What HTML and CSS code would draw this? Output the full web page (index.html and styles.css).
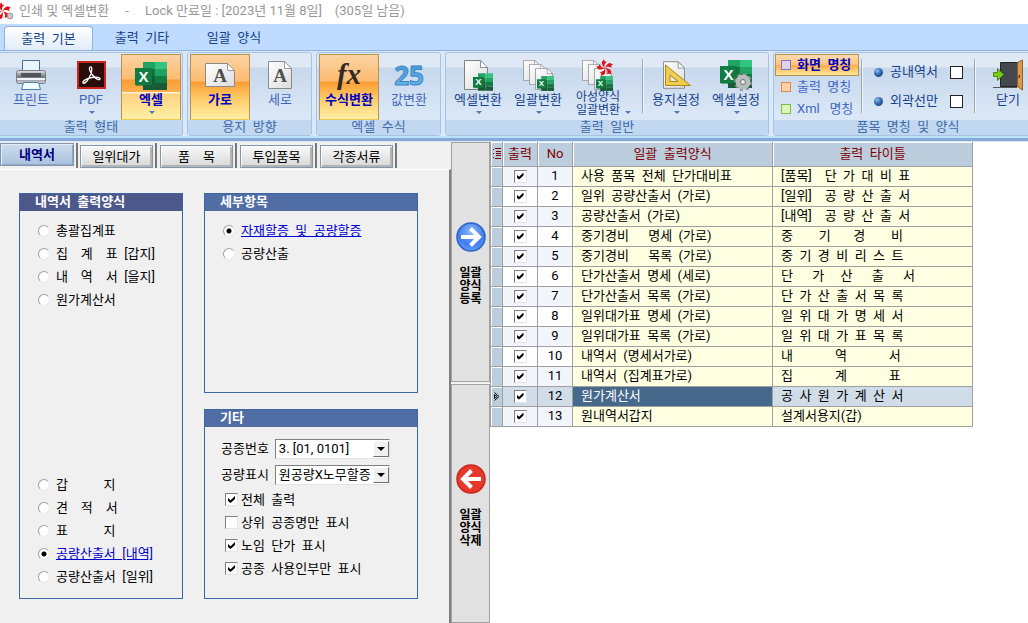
FILE: index.html
```html
<!DOCTYPE html>
<html lang="ko">
<head>
<meta charset="utf-8">
<title>인쇄 및 엑셀변환</title>
<link rel="stylesheet" href="styles.css">
</head>
<body>
<svg class="defs" aria-hidden="true">
  <defs>
    <linearGradient id="gPaper" x1="0" y1="0" x2="1" y2="1"><stop offset="0" stop-color="#fff"/><stop offset="1" stop-color="#dcdcdc"/></linearGradient>
    <linearGradient id="gBlue" x1="0" y1="0" x2="0" y2="1"><stop offset="0" stop-color="#3f8fd0"/><stop offset="1" stop-color="#6ec0f0"/></linearGradient>
    <linearGradient id="gGrey" x1="0" y1="0" x2="0" y2="1"><stop offset="0" stop-color="#e8e8e8"/><stop offset=".5" stop-color="#6f747a"/><stop offset="1" stop-color="#d5d8dc"/></linearGradient>
    <radialGradient id="gGo" cx=".5" cy=".3" r=".8"><stop offset="0" stop-color="#8db6fb"/><stop offset=".6" stop-color="#3f7cf0"/><stop offset="1" stop-color="#79b4ff"/></radialGradient>
    <symbol id="excel" viewBox="0 0 32 28">
      <path fill="#21a366" d="M8 0h12v7H8z"/><path fill="#33c481" d="M20 0h12v7H20z"/>
      <path fill="#107c41" d="M8 7h12v7H8z"/><path fill="#21a366" d="M20 7h12v7H20z"/>
      <path fill="#185c37" d="M8 14h12v14H8z"/><path fill="#107c41" d="M20 14h12v7H20z"/><path fill="#185c37" d="M20 21h12v7H20z"/>
      <path fill="#0b5a30" d="M1 7h17v17H1z" opacity=".5"/><path fill="#107c41" d="M0 6h17v17H0z"/>
      <text x="8.500" y="19.500" text-anchor="middle" class="svg-x">X</text>
    </symbol>
    <symbol id="page" viewBox="0 0 24 30">
      <path fill="url(#gPaper)" stroke="#7d8186" d="M.5.5h16l7 7v22H.5z"/><path fill="#fff" stroke="#8d9196" d="M16.500.5v7h7z"/>
    </symbol>
    <symbol id="flower" viewBox="-10 -10 20 20">
      <g fill="#e01418">
        <path id="petal" d="M0 0C-2-2-4-4-3.500-7L-1-9.800L-.5-7.500L2-7C0-5-1.500-3 0 0Z"/>
        <use href="#petal" transform="rotate(72)"/><use href="#petal" transform="rotate(144)"/>
        <use href="#petal" transform="rotate(216)"/><use href="#petal" transform="rotate(288)"/>
      </g>
    </symbol>
  </defs>
</svg>

<header class="titlebar">
  <svg class="app-icon" width="14" height="20" viewBox="0 0 14 20"><use href="#flower" x="-7" y="1" width="19" height="19"/><path fill="#c9c9c9" stroke="#999" d="M7.500 13q3-2 5 0v4q-2.500 2-5 0z"/></svg>
  <h1 class="title">인쇄 및 엑셀변환     -     Lock 만료일 : [2023년 11월 8일]    (305일 남음)</h1>
</header>

<nav class="ribbon-tabs">
  <button class="ribbon-tab is-active">출력  기본</button>
  <button class="ribbon-tab">출력  기타</button>
  <button class="ribbon-tab">일괄  양식</button>
</nav>

<div class="ribbon">
  <section class="group group-first">
    <div class="group-body">
      <button class="tool"><svg class="ico" width="32" height="32" viewBox="0 0 32 32"><path fill="#eaf4ff" stroke="#4a6f96" d="M7.500 1.500h17v12h-17z"/><rect x="1.500" y="11.500" width="29" height="13" rx="2" fill="url(#gGrey)" stroke="#777c82"/><path fill="#4f545a" d="M6 14h20v4H6z"/><path fill="#eef4fa" d="M2 19h28v2H2z"/><path fill="#f1faff" stroke="#4a82ae" d="M8.500 23.500h15l2 7h-19z"/></svg><span class="lbl">프린트</span></button>
      <button class="tool"><svg class="ico" width="32" height="32" viewBox="0 0 32 32"><path fill="#c8261c" d="M2 2h29v28H2z"/><path fill="#2a0c0b" d="M4 4h25v24H4z"/><path fill="none" stroke="#fff" stroke-width="1.300" d="M15 8c3-1 2 6-1 11-2 4-5 6-6 5-1-2 5-5 9-5.500 4-.6 8-.5 8 1.500 0 2-5-.5-7.500-4C15 13 13.500 9 15 8z"/></svg><span class="lbl">PDF</span><i class="drop"></i></button>
      <button class="tool is-on is-split"><svg class="ico" width="32" height="32" viewBox="0 0 32 32"><use href="#excel" y="3" width="32" height="28"/></svg><span class="lbl">엑셀</span><i class="drop"></i></button>
    </div>
    <h2 class="group-title">출력  형태</h2>
  </section>
  <section class="group group-pair">
    <div class="group-body">
      <button class="tool is-on"><svg class="ico" width="32" height="32" viewBox="0 0 32 32"><path fill="url(#gPaper)" stroke="#8a8a8a" d="M1.500 4.500h22l7 7v16h-29z"/><path fill="#fff" stroke="#999" d="M23.500 4.500v7h7z"/><text x="16" y="23" text-anchor="middle" class="svg-a">A</text></svg><span class="lbl">가로</span></button>
      <button class="tool"><svg class="ico" width="32" height="32" viewBox="0 0 32 32"><path fill="url(#gPaper)" stroke="#8a8a8a" d="M4.500 2.500h16l7 7v20h-23z"/><path fill="#fff" stroke="#999" d="M20.500 2.500v7h7z"/><text x="16" y="23" text-anchor="middle" class="svg-a">A</text></svg><span class="lbl">세로</span></button>
    </div>
    <h2 class="group-title">용지  방향</h2>
  </section>
  <section class="group group-pair">
    <div class="group-body">
      <button class="tool is-on"><svg class="ico" width="32" height="32" viewBox="0 0 32 32"><text x="16" y="25" text-anchor="middle" class="svg-fx">fx</text></svg><span class="lbl">수식변환</span></button>
      <button class="tool"><svg class="ico" width="32" height="32" viewBox="0 0 32 32"><text x="16" y="26" text-anchor="middle" class="svg-25">25</text></svg><span class="lbl">값변환</span></button>
    </div>
    <h2 class="group-title">엑셀  수식</h2>
  </section>
  <section class="group group-general">
    <div class="group-body">
      <button class="tool dark"><svg class="ico" width="32" height="32" viewBox="0 0 32 32"><use href="#page" x="2" y="1" width="24" height="30"/><use href="#excel" x="11" y="14" width="20" height="18"/></svg><span class="lbl">엑셀변환</span><i class="drop"></i></button>
      <button class="tool dark"><svg class="ico" width="32" height="32" viewBox="0 0 32 32"><use href="#page" x="1" y="1" width="17" height="21"/><use href="#page" x="7" y="5" width="17" height="21"/><use href="#page" x="13" y="9" width="18" height="22"/><use href="#excel" x="15" y="17" width="17" height="15"/></svg><span class="lbl">일괄변환</span><i class="drop"></i></button>
      <button class="tool tool-wide dark"><svg class="ico" width="32" height="32" viewBox="0 0 32 32"><use href="#page" x="0" y="1" width="17" height="21"/><use href="#page" x="6" y="5" width="17" height="21"/><use href="#page" x="12" y="9" width="18" height="22"/><use href="#excel" x="14" y="17" width="17" height="15"/><use href="#flower" x="14" y="0" width="18" height="18"/></svg><span class="lbl lbl-two">아성양식<br>일괄변환</span><i class="drop"></i></button>
      <span class="sep"></span>
      <button class="tool dark"><svg class="ico" width="32" height="32" viewBox="0 0 32 32"><use href="#page" x="3" y="2" width="22" height="28"/><path fill="#f0cd4e" fill-rule="evenodd" stroke="#a88718" d="M5.500 6v20.500h25zM10 16v6.500h8z"/></svg><span class="lbl">용지설정</span><i class="drop"></i></button>
      <button class="tool dark"><svg class="ico" width="32" height="32" viewBox="0 0 32 32"><use href="#excel" y="1" width="32" height="28"/><circle cx="23" cy="23" r="7.500" fill="none" stroke="#8b8e91" stroke-width="3" stroke-dasharray="3 2.890"/><circle cx="23" cy="23" r="5" fill="none" stroke="#b9bcbf" stroke-width="5"/><circle cx="23" cy="23" r="2.500" fill="#e5e8ea" stroke="#777"/></svg><span class="lbl">엑셀설정</span><i class="drop"></i></button>
    </div>
    <h2 class="group-title">출력  일반</h2>
  </section>
  <section class="group group-names">
    <div class="group-body">
      <div class="mini-list">
        <button class="mini is-on"><i class="sq sq-violet"></i>화면  명칭</button>
        <button class="mini"><i class="sq sq-orange"></i>출력  명칭</button>
        <button class="mini"><i class="sq sq-green"></i>Xml   명칭</button>
      </div>
      <span class="sep"></span>
      <div class="opts">
        <label class="opt"><i class="ball"></i><span class="opt-text">공내역서</span><input type="checkbox" class="opt-box"></label>
        <label class="opt"><i class="ball"></i><span class="opt-text">외곽선만</span><input type="checkbox" class="opt-box"></label>
      </div>
      <span class="sep"></span>
      <button class="tool dark"><svg class="ico" width="32" height="32" viewBox="0 0 32 32"><path fill="#44484d" stroke="#222" d="M8.500 3.500h18v24h-18z"/><path fill="#d99a50" stroke="#9a6222" d="M25.500 3.500l5-2.500v30l-5-3.500z"/><path fill="#6b3d10" d="M26.500 16h1.500v3h-1.500z"/><path stroke="#555" d="M1 28.500h24"/><path fill="#7ccc1a" stroke="#4d8a0a" d="M1.500 13.500h4v-4l6 6-6 6v-4h-4z"/></svg><span class="lbl">닫기</span></button>
    </div>
    <h2 class="group-title">품목  명칭  및  양식</h2>
  </section>
</div>

<main class="main">
  <div class="left">
    <ul class="tabs">
      <li class="tab-item"><button class="tab is-active">내역서</button></li>
      <li class="tab-item"><button class="tab">일위대가</button></li>
      <li class="tab-item"><button class="tab">품    목</button></li>
      <li class="tab-item"><button class="tab">투입품목</button></li>
      <li class="tab-item"><button class="tab">각종서류</button></li>
    </ul>
    <div class="panel">
      <fieldset class="box box-forms">
        <h3 class="box-title box-title-dark">내역서  출력양식</h3>
        <div class="box-body">
          <div class="rows">
            <label class="row"><input type="radio" name="form" class="radio"><span>총괄집계표</span></label>
            <label class="row"><input type="radio" name="form" class="radio"><span>집    계    표  [갑지]</span></label>
            <label class="row"><input type="radio" name="form" class="radio"><span>내    역    서  [을지]</span></label>
            <label class="row"><input type="radio" name="form" class="radio"><span>원가계산서</span></label>
          </div>
          <div class="rows">
            <label class="row"><input type="radio" name="form" class="radio"><span>갑           지</span></label>
            <label class="row"><input type="radio" name="form" class="radio"><span>견    적    서</span></label>
            <label class="row"><input type="radio" name="form" class="radio"><span>표           지</span></label>
            <label class="row"><input type="radio" name="form" class="radio" checked><span class="picked">공량산출서  [내역]</span></label>
            <label class="row"><input type="radio" name="form" class="radio"><span>공량산출서  [일위]</span></label>
          </div>
        </div>
      </fieldset>
      <fieldset class="box">
        <h3 class="box-title">세부항목</h3>
        <div class="box-body">
          <div class="rows">
            <label class="row"><input type="radio" name="detail" class="radio" checked><span class="picked">자재할증  및  공량할증</span></label>
            <label class="row"><input type="radio" name="detail" class="radio"><span>공량산출</span></label>
          </div>
        </div>
      </fieldset>
      <fieldset class="box">
        <h3 class="box-title">기타</h3>
        <div class="box-body box-etc">
          <div class="field"><label for="no">공종번호</label><span class="combo"><select id="no" class="combo-select"><option>3.  [01,  0101]</option></select><i class="combo-btn"></i></span></div>
          <div class="field"><label for="qty">공량표시</label><span class="combo"><select id="qty" class="combo-select"><option>원공량X노무할증</option></select><i class="combo-btn"></i></span></div>
          <div class="rows rows-checks">
            <label class="row"><input type="checkbox" class="check" checked><span>전체  출력</span></label>
            <label class="row"><input type="checkbox" class="check"><span>상위  공종명만  표시</span></label>
            <label class="row"><input type="checkbox" class="check" checked><span>노임  단가  표시</span></label>
            <label class="row"><input type="checkbox" class="check" checked><span>공종  사용인부만  표시</span></label>
          </div>
        </div>
      </fieldset>
    </div>
  </div>

  <div class="mover">
    <button class="move"><svg width="30" height="30" viewBox="0 0 30 30"><circle cx="15" cy="15" r="14" fill="url(#gGo)" stroke="#2b62c4" stroke-width="1.500"/><path fill="none" stroke="#fff" stroke-width="4" d="M5 15h18M14.500 6.500L23 15l-8.500 8.500"/></svg><span class="move-text">일괄<br>양식<br>등록</span></button>
    <button class="move"><svg width="30" height="30" viewBox="0 0 30 30"><circle cx="15" cy="15" r="14" fill="#e8382a" stroke="#c9281c" stroke-width="1.500"/><path fill="none" stroke="#fff" stroke-width="4" d="M25 15H8M15.500 6.500L7 15l8.500 8.500"/></svg><span class="move-text">일괄<br>양식<br>삭제</span></button>
  </div>

  <div class="grid-area">
    <table class="grid">
      <colgroup><col class="c-mark"><col class="c-out"><col class="c-no"><col class="c-text"><col class="c-text"></colgroup>
      <thead>
        <tr><th><svg class="list-ico" width="8" height="11" viewBox="0 0 8 11"><path stroke="#800000" d="M0 1.500h1M2 .5h6M3 3.500h5M0 5.500h1M3 5.500h5M3 7.500h5M0 9.500h1M2 10.500h6"/></svg></th><th>출력</th><th>No</th><th>일괄  출력양식</th><th>출력  타이틀</th></tr>
      </thead>
      <tbody>
        <tr><td></td><td><input type="checkbox" class="check" aria-label="1" checked></td><td>1</td><td>사용  품목  전체  단가대비표</td><td>[품목]    단  가  대  비  표</td></tr>
        <tr><td></td><td><input type="checkbox" class="check" aria-label="2" checked></td><td>2</td><td>일위  공량산출서  (가로)</td><td>[일위]    공  량  산  출  서</td></tr>
        <tr><td></td><td><input type="checkbox" class="check" aria-label="3" checked></td><td>3</td><td>공량산출서  (가로)</td><td>[내역]    공  량  산  출  서</td></tr>
        <tr><td></td><td><input type="checkbox" class="check" aria-label="4" checked></td><td>4</td><td>중기경비      명세  (가로)</td><td>중        기       경        비</td></tr>
        <tr><td></td><td><input type="checkbox" class="check" aria-label="5" checked></td><td>5</td><td>중기경비      목록  (가로)</td><td>중  기  경  비  리  스  트</td></tr>
        <tr><td></td><td><input type="checkbox" class="check" aria-label="6" checked></td><td>6</td><td>단가산출서  명세  (세로)</td><td>단      가     산      출      서</td></tr>
        <tr><td></td><td><input type="checkbox" class="check" aria-label="7" checked></td><td>7</td><td>단가산출서  목록  (가로)</td><td>단  가  산  출  서  목  록</td></tr>
        <tr><td></td><td><input type="checkbox" class="check" aria-label="8" checked></td><td>8</td><td>일위대가표  명세  (가로)</td><td>일  위  대  가  명  세  서</td></tr>
        <tr><td></td><td><input type="checkbox" class="check" aria-label="9" checked></td><td>9</td><td>일위대가표  목록  (가로)</td><td>일  위  대  가  표  목  록</td></tr>
        <tr><td></td><td><input type="checkbox" class="check" aria-label="10" checked></td><td>10</td><td>내역서  (명세서가로)</td><td>내             역             서</td></tr>
        <tr><td></td><td><input type="checkbox" class="check" aria-label="11" checked></td><td>11</td><td>내역서  (집계표가로)</td><td>집             계             표</td></tr>
        <tr class="current"><td><svg class="cursor-ico" width="6" height="9" viewBox="0 0 6 9"><path fill="none" stroke="#111" d="M.5.5L5 4.500.5 8.500M.5 2.500v4L3 4.500z"/></svg></td><td><input type="checkbox" class="check" aria-label="12" checked></td><td>12</td><td>원가계산서</td><td>공  사  원  가  계  산  서</td></tr>
        <tr><td></td><td><input type="checkbox" class="check" aria-label="13" checked></td><td>13</td><td>원내역서갑지</td><td>설계서용지(갑)</td></tr>
      </tbody>
    </table>
  </div>
</main>
</body>
</html>
```
FILE: styles.css
```css
* { box-sizing: border-box; }

body {
  margin: 0;
  height: 100vh;
  display: flex;
  flex-direction: column;
  overflow: hidden;
  background: #fff;
  color: #000;
  font: 13px/16px Roboto, "Noto Sans CJK KR", sans-serif;
}

button, select, input { font: inherit; color: inherit; margin: 0; }
button { border: 0; padding: 0; background: none; }
h1, h2, h3, ul { margin: 0; padding: 0; font: inherit; list-style: none; }
h1, h2, h3, button, select, span, th, td { white-space: pre; }
svg { overflow: visible; }
.defs { position: absolute; width: 0; height: 0; }

.svg-x { font: bold 15px "Liberation Sans", sans-serif; fill: #fff; }
.svg-a { font: bold 19px "Liberation Serif", serif; fill: #505050; }
.svg-fx { font: italic bold 29px "Liberation Serif", serif; fill: #332a24; }
.svg-25 { font: bold 26px "Open Sans", sans-serif; fill: url(#gBlue); stroke: #3a86c4; stroke-width: 1; }

/* title bar */
.titlebar { display: flex; align-items: center; height: 24px; flex: none; gap: 5px; padding-bottom: 2px; }
.app-icon { overflow: hidden; }
.title { color: #979797; }

/* ribbon tabs */
.ribbon-tabs { display: flex; flex: none; height: 26px; padding: 2px 0 0 4px; background: #bfdbff; }
.ribbon-tab { width: 92px; color: #15428b; }
.ribbon-tab.is-active {
  width: 89px;
  margin-right: 3px;
  border: 1px solid #8db2e3;
  border-bottom: 0;
  border-radius: 4px 4px 0 0;
  background: linear-gradient(#fff, #e1ecf9);
}

/* ribbon */
.ribbon {
  display: flex;
  flex: none;
  gap: 4px;
  height: 92px;
  padding: 2px 0 4px;
  overflow: hidden;
  background: linear-gradient(#8db2e3 0 1px, #dbe8f7 1px 86px, #b9e4f7 86px 88px, #86a9d9 88px 91px, #dfe6ee 91px);
}
.group {
  display: flex;
  flex-direction: column;
  flex: none;
  height: 84px;
  border: 1px solid #a6c3e4;
  border-radius: 3px;
  background: linear-gradient(#dfe9f5 0 14px, #c8d8ec 15px, #dce9f7 69px);
}
.group-first { width: 183px; border-left: 0; border-radius: 0 3px 3px 0; }
.group-pair { width: 125px; }
.group-general { width: 324px; }
.group-names { flex: 1 0 270px; }
.group-body { display: flex; flex: 1; padding: 1px 2px 0; }
.group-first .group-body, .group-names .group-body { padding-left: 1px; }
.group-title { height: 15px; text-align: center; line-height: 13px; color: #3e6aaa; background: #c2d8f0; }

.tool {
  position: relative;
  display: flex;
  flex-direction: column;
  align-items: center;
  flex: none;
  width: 60px;
  height: 66px;
  padding-top: 4px;
  border: 1px solid transparent;
  color: #3f68b8;
}
.tool.dark { color: #15428b; }
.ico { display: block; flex: none; }
.lbl { line-height: 17px; }
.tool-wide { width: 72px; padding-right: 12px; }
.lbl-two { font-size: 12px; line-height: 13px; text-align: left; }
.drop {
  position: absolute;
  left: 27px;
  bottom: 5px;
  border: 3px solid transparent;
  border-top-color: #4a7ab8;
  border-bottom: 0;
}
.tool-wide .drop { left: auto; right: 8px; }
.is-on { font-weight: bold; }
.tool.is-on {
  color: #0000c0;
  border: 1px solid #b8924f;
  border-bottom-color: #f0c850;
  background: linear-gradient(#fbd3a3 0, #fdbb72 26px, #fb9c34 27px, #fdc765 42px, #fff0a4 64px);
}
.tool.is-split { background: linear-gradient(#fbd3a3 0, #fdbb72 24px, #fb9c34 25px, #fcb050 37px, #fff2d8 37px 38px, #fed280 39px, #fff0a4 64px); }
.sep { flex: none; width: 2px; height: 54px; margin: 5px 2px 0; background: linear-gradient(90deg, #9aa7b8 50%, #eef4fb 50%); }

.mini-list { display: flex; flex-direction: column; width: 84px; flex: none; }
.mini { display: flex; align-items: center; gap: 6px; height: 22px; padding-left: 5px; color: #3f68c8; border: 1px solid transparent; }
.mini.is-on { color: #0000c0; border-color: #b8924f; background: linear-gradient(#fbdcb0, #fdc27a 50%, #fbad4a 52%, #ffe79a); }
.sq { width: 10px; height: 10px; border: 1px solid #8672b8; background: #dcd4f0; }
.sq-orange { border-color: #e08a48; background: #fcd0a8; }
.sq-green { border-color: #86bc4c; background: #dcf5b8; }
.opts { display: flex; flex-direction: column; gap: 13px; width: 107px; flex: none; padding: 10px 0 0 9px; }
.opt { display: flex; align-items: center; color: #15428b; }
.ball { width: 9px; height: 9px; margin-right: 7px; border-radius: 50%; background: radial-gradient(circle at 35% 30%, #8cc0f0, #2c62a8 50%, #173c74); }
.opt-text { width: 60px; }
.opt-box { appearance: none; width: 13px; height: 13px; border: 1px solid #222; background: #fff; }

/* work area */
.main { display: flex; flex: 1; min-height: 0; }
.left { display: flex; flex-direction: column; flex: none; width: 451px; background: #f0f0f0; }
.tabs { display: flex; height: 27px; flex: none; padding-top: 1px; }
.tab-item { flex: none; width: 77px; height: 25px; margin-right: 3px; padding-right: 2px; border-right: 2px solid #777; }
.tab-item:first-child { width: 78px; margin-right: 2px; }
.tab { width: 100%; height: 23px; margin-top: 2px; border: 1px solid #8296ad; box-shadow: inset 1px 1px #fff, inset -2px -2px #b4b4b4; background: linear-gradient(#f8f8f8, #d8d8d8); }
.tab.is-active { margin-top: 0; color: #000080; font-weight: bold; background: linear-gradient(#cddcee, #a9c2df); box-shadow: inset 1px 1px #dfeaf6, inset -1px -1px #8ea9c8; }
.panel {
  display: grid;
  flex: 1;
  min-height: 0;
  grid-template-columns: 164px 214px;
  grid-template-rows: 200fr 190fr;
  gap: 16px 21px;
  padding: 23px 0 24px 19px;
  border-top: 1px solid #fff;
  border-right: 2px solid #808080;
}
.box { display: flex; flex-direction: column; min-width: 0; margin: 0; padding: 0; border: 1px solid #3a66a6; }
.box-forms { grid-row: 1 / 3; }
.box-title { height: 17px; flex: none; padding-left: 15px; color: #fff; font-weight: bold; background: #506da5; }
.box-title-dark { background: #4d588a; }
.box-body { display: flex; flex-direction: column; justify-content: space-between; flex: 1; padding: 8px 0 10px 18px; }
.rows { display: flex; flex-direction: column; }
.row { display: flex; align-items: center; gap: 6px; height: 23px; }
.picked { color: #0000d0; text-decoration: underline; }
.radio, .check { appearance: none; flex: none; width: 13px; height: 13px; border: 1px solid; border-color: #808080 #e3e3e3 #e3e3e3 #808080; background: #fff; }
.radio { width: 12px; height: 12px; border-radius: 50%; border-color: #a0a0a0 #e8e8e8 #e8e8e8 #a0a0a0; }
.radio:checked { background: radial-gradient(circle, #000 2px, #fff 3px); }
.check:checked::before { content: ""; display: block; width: 7px; height: 7px; margin: 2px; background: #000; clip-path: polygon(0 28%, 36% 62%, 100% 0, 100% 42%, 36% 100%, 0 70%); }
.box-etc { justify-content: flex-start; padding: 12px 0 0 16px; }
.field { display: flex; align-items: center; gap: 6px; height: 20px; margin-bottom: 6px; }
.combo { position: relative; width: 115px; height: 20px; }
.combo-select { appearance: none; display: block; width: 100%; height: 20px; padding: 0 0 0 3px; line-height: 16px; border: 1px solid; border-color: #808080 #e3e3e3 #e3e3e3 #808080; border-radius: 0; background: #fff; }
.combo-btn { position: absolute; right: 1px; top: 2px; width: 16px; height: 16px; border: 1px solid; border-color: #fff #707070 #707070 #fff; background: #f0f0f0; pointer-events: none; }
.combo-btn::before { content: ""; display: block; width: 0; margin: 5px 3px; border: 4px solid transparent; border-top-color: #000; border-bottom: 0; }
.rows-checks { padding-left: 4px; margin-top: -3px; }
.rows-checks .row { gap: 3px; }

.mover { display: flex; flex-direction: column; flex: none; width: 39px; gap: 2px; background: #f4f4f4; }
.move { display: flex; flex-direction: column; align-items: center; justify-content: flex-start; flex: 1; padding-top: 79px; gap: 15px; border: 1px solid #a2a2a2; background: #e1e1e1; }
.move-text { font-size: 12px; font-weight: bold; line-height: 13px; }

.grid-area { flex: 1; background: #fff; overflow: hidden; }
.grid { border-collapse: collapse; table-layout: fixed; width: 482px; }
.c-mark { width: 12px; }
.c-out { width: 35px; }
.c-no { width: 35px; }
.c-text { width: 200px; }
.grid th, .grid td { height: 20px; padding: 0; border: 1px solid #a0a0a0; line-height: 16px; font-weight: normal; overflow: hidden; text-align: center; }
.grid th { height: 24px; border-top: 0; color: #800000; background: #bccddd; box-shadow: inset 1px 1px #fff; }
.grid td:nth-child(1) { background: #bccddd; box-shadow: inset 1px 1px #fff; }
.grid td:nth-child(n+4) { text-align: left; padding-left: 8px; background: #ffffe1; }
.grid tr:nth-child(odd) td:nth-child(2), .grid tr:nth-child(odd) td:nth-child(3) { background: #f2f6fc; }
.grid .check, .list-ico, .cursor-ico { display: block; margin: 0 auto; }
.grid .current td:nth-child(n+2) { background: #d0dce8; }
.grid .current td:nth-child(4) { background: #46688a; color: #fff; }
```
